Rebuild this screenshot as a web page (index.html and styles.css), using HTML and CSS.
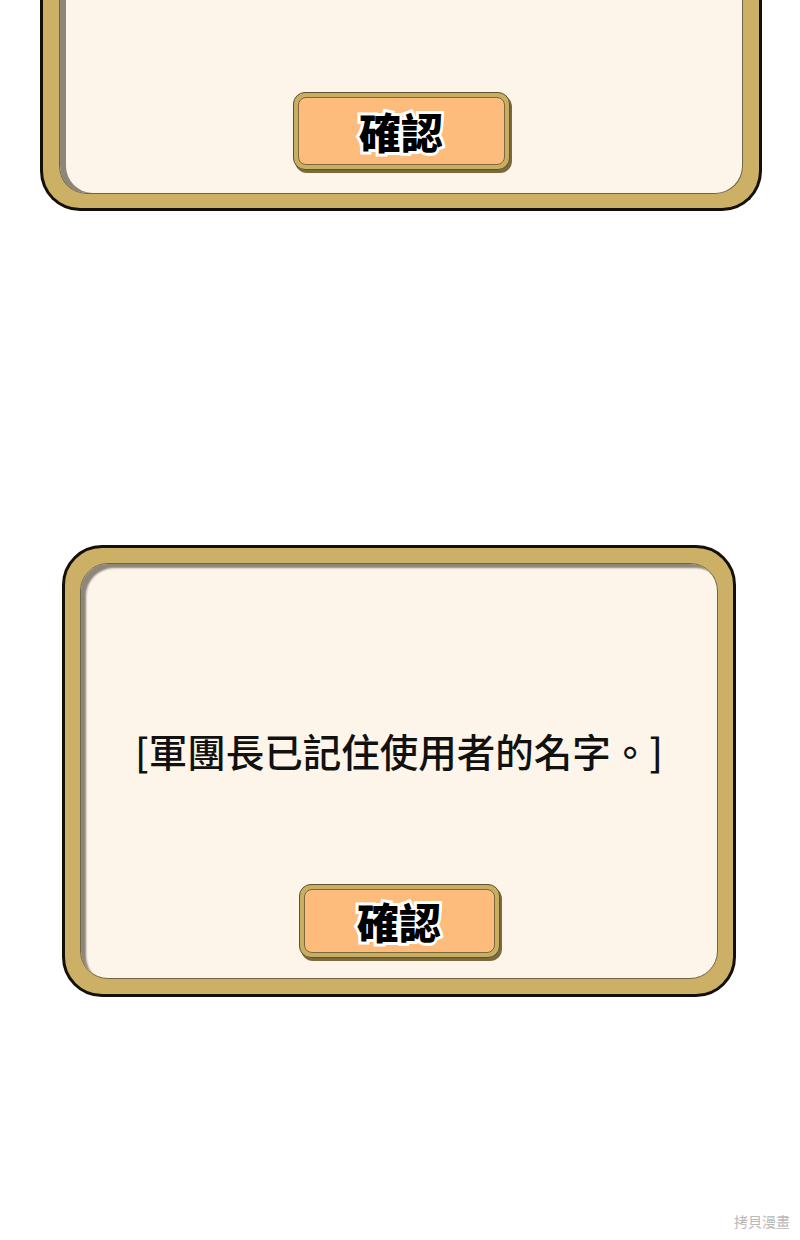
FILE: index.html
```html
<!DOCTYPE html>
<html lang="zh-Hant">
<head>
    <meta charset="UTF-8">
    <meta name="viewport" content="width=device-width, initial-scale=1.0">
    <title>確認</title>
    <link rel="stylesheet" href="styles.css">
</head>
<body>
    <div class="panel panel-top">
        <div class="panel-inner panel-inner-top">
            <div class="btn btn-big">
                <div class="btn-face"><span class="btn-text">確認</span></div>
            </div>
        </div>
    </div>

    <div class="panel panel-main">
        <div class="panel-inner panel-inner-main">
            <p class="message">[軍團長已記住使用者的名字。]</p>
            <div class="btn">
                <div class="btn-face"><span class="btn-text">確認</span></div>
            </div>
        </div>
    </div>

    <div class="watermark">拷貝漫畫</div>
</body>
</html>
```

FILE: styles.css
```css
* {
    box-sizing: border-box;
    margin: 0;
    padding: 0;
}

body {
    width: 800px;
    height: 1240px;
    background: #ffffff;
    font-family: "Noto Sans CJK TC", "Noto Sans", sans-serif;
    overflow: hidden;
}

.panel {
    background: #cbb066;
    border: 3px solid #141008;
}

.panel-inner {
    background: #fdf5ea;
    border: 1px solid #6e6448;
    box-shadow: inset 6px 5px 2px -1px #8e8678;
    display: flex;
    flex-direction: column;
    align-items: center;
    height: 100%;
}

/* top dialog, cut off by the top edge */
.panel-top {
    width: 722px;
    height: 211px;
    margin-left: 40px;
    border-top: 0;
    border-radius: 0 0 40px 40px;
    padding: 0 16px 14px 16px;
}

.panel-inner-top {
    border-top: 0;
    border-radius: 0 0 28px 28px;
    box-shadow: inset 6px 0 0 #8e8678;
    justify-content: flex-end;
    padding-bottom: 23px;
}

/* main dialog */
.panel-main {
    width: 674px;
    height: 452px;
    margin: 334px 0 0 62px;
    border-radius: 40px;
    padding: 15px;
}

.panel-inner-main {
    border-radius: 28px;
    padding-top: 163px;
}

.message {
    font-size: 38.5px;
    font-weight: 500;
    line-height: 46px;
    color: #111;
}

.btn {
    width: 201px;
    height: 74px;
    margin-top: 111px;
    padding: 4px;
    background: #c9ae62;
    border: 1px solid #5c5030;
    border-radius: 12px;
    box-shadow: 2px 3px 0 #7a6a3e;
}

.btn-big {
    width: 217px;
    height: 78px;
    margin-top: 0;
}

.btn-face {
    height: 100%;
    background: #fdbb7c;
    border: 1px solid #7a6a40;
    border-radius: 8px;
    display: flex;
    align-items: center;
    justify-content: center;
}

.btn-text {
    font-size: 42px;
    font-weight: 900;
    line-height: 1;
    color: #000;
    -webkit-text-stroke: 6px #ffffff;
    paint-order: stroke fill;
}

.watermark {
    margin: 215px 10px 0 0;
    text-align: right;
    font-size: 14px;
    line-height: 18px;
    color: #b8b8b8;
}
```
